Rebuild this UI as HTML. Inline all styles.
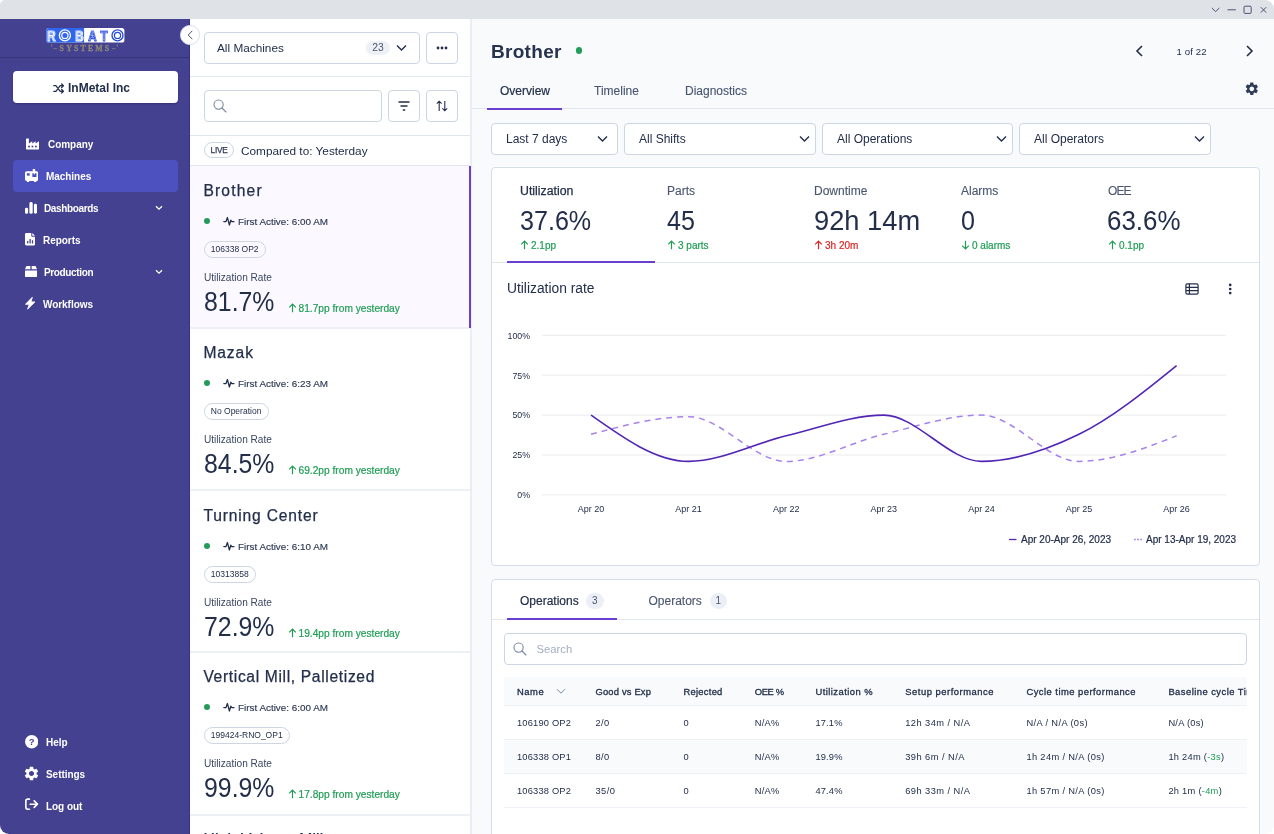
<!DOCTYPE html>
<html lang="en">
<head>
<meta charset="utf-8">
<title>Robato Systems - Machines</title>
<style>
*{box-sizing:border-box;margin:0;padding:0}
html,body{width:1274px;height:834px;background:#fff;overflow:hidden}
body{font-family:"Liberation Sans",sans-serif;color:#222e4a;font-size:12px;position:relative}
.abs{position:absolute}
.win{position:absolute;left:0;top:0;width:1274px;height:834px;border-radius:5px 9px 9px 9px;overflow:hidden;background:#f8fafc;will-change:transform}
.tbar{position:absolute;left:0;top:0;width:1274px;height:19px;background:#dfe2e7}
.side{position:absolute;left:0;top:19px;width:190px;height:815px;background:#434190;border-right:1px solid #363389}
.side .logoline{position:absolute;left:0;top:38px;width:190px;height:1px;background:#37337a}
.org{position:absolute;left:13px;top:51.5px;width:165px;height:32.5px;background:#fff;border-radius:4px;text-align:center;line-height:34.5px;padding-right:8px;font-size:12px;font-weight:700;color:#222e4a;box-shadow:0 1px 2px rgba(0,0,0,.2)}
.nav{position:absolute;left:13px;width:165px;height:32px;border-radius:4px;color:#fff;font-weight:700;font-size:10px;line-height:33.5px;letter-spacing:-.05px}
.nav.on{background:#4c51bf}
.nav svg{position:absolute}
.nav span{position:absolute;top:0}
.nav span.nr{letter-spacing:-.36px}
.list{position:absolute;left:190px;top:19px;width:282px;height:815px;background:#fff;border-right:2px solid #e9eef4}
.hl{position:absolute;left:0;width:280px;height:1px;background:#dfe6ee}
.box{position:absolute;border:1px solid #ccd6e3;border-radius:4px;background:#fff}
.t{position:absolute;white-space:nowrap}
.main{position:absolute;left:471px;top:19px;width:803px;height:815px}
.card{position:absolute;background:#fff;border:1px solid #d5dde8;border-radius:4px}
.green{color:#1f9d55}
.red{color:#e02424}
.mc{position:absolute;left:0;width:280px;height:163px;border-bottom:2px solid #edf1f6}
.mc .nm{position:absolute;left:13.4px;top:16px;font-size:15.6px;color:#222e4a;white-space:nowrap;-webkit-text-stroke:.25px #222e4a}
.mc .dot{position:absolute;left:13.7px;top:51.7px;width:6.6px;height:6.6px;border-radius:50%;background:#259b5b}
.mc .fa{position:absolute;left:48px;top:49.5px;font-size:9.9px;color:#2d3954;white-space:nowrap;-webkit-text-stroke:.15px #2d3954}
.mc .pulse{position:absolute;left:33.2px;top:49.2px}
.mc .tag{position:absolute;left:13.5px;top:74.5px;height:17px;border:1px solid #ccd6e3;border-radius:8.5px;font-size:8.5px;line-height:15px;padding:0 6.3px;color:#222e4a;white-space:nowrap}
.mc .ul{position:absolute;left:14px;top:106px;font-size:10.1px;color:#3a4660}
.mc .uv{position:absolute;left:13.5px;top:120.7px;font-size:27px;color:#222e4a;transform:scaleX(.92);transform-origin:0 0}
.mc .ud{position:absolute;left:97.5px;top:137px;font-size:10.2px;color:#1f9d55;white-space:nowrap;-webkit-text-stroke:.2px #1f9d55}
.th{position:absolute;white-space:nowrap;top:9.3px;font-size:9.4px;color:#222e4a;-webkit-text-stroke:.3px #222e4a}
.td{position:absolute;white-space:nowrap;font-size:9.3px;color:#222e4a}
</style>
</head>
<body>
<div class="win">
<div class="tbar"><svg class="abs" style="left:1208px;top:4px" width="62" height="12" viewBox="0 0 62 12" fill="none" stroke="#4a5670" stroke-width="1"><path d="M3.800 4 7.600 7.600 11.400 4"/><path d="M19.500 5.800h8.300"/><rect x="36" y="2.200" width="7.200" height="7.200" rx="1"/><path d="M52.800 3.200l5.400 5.400M58.200 3.200l-5.400 5.400"/></svg></div>
<div class="side">
<svg class="abs" style="left:40px;top:3px" width="90" height="36" viewBox="40 22 90 36">
<rect x="46.200" y="28" width="78.200" height="14.600" rx="2.600" fill="#fff"/>
<path d="M48.800 28H84.100V42.600H48.800A2.600 2.600 0 0 1 46.200 40V30.600A2.600 2.600 0 0 1 48.800 28z" fill="#2f66f0"/>
<g transform="translate(51.4 41.300) scale(.76 1)"><text x="0" y="0" text-anchor="middle" font-family="Liberation Sans, sans-serif" font-weight="700" font-size="15.200" fill="#fff" stroke="#fff" stroke-width="1.100" stroke-linejoin="round">R</text><text x="0" y="0" text-anchor="middle" font-family="Liberation Sans, sans-serif" font-weight="700" font-size="15.200" fill="none" stroke="#2f66f0" stroke-width=".45" stroke-opacity=".75" transform="scale(.86) translate(0 -.95)">R</text></g>
<circle cx="64.900" cy="35.400" r="5.500" fill="#2f66f0" stroke="#fff" stroke-width="1.300"/><circle cx="64.900" cy="35.400" r="3.100" fill="#2f66f0" stroke="#fff" stroke-width="1.200"/>
<g transform="translate(79.3 41.300) scale(.76 1)"><text x="0" y="0" text-anchor="middle" font-family="Liberation Sans, sans-serif" font-weight="700" font-size="15.200" fill="#fff" stroke="#fff" stroke-width="1.100" stroke-linejoin="round">B</text><text x="0" y="0" text-anchor="middle" font-family="Liberation Sans, sans-serif" font-weight="700" font-size="15.200" fill="none" stroke="#2f66f0" stroke-width=".45" stroke-opacity=".75" transform="scale(.86) translate(0 -.95)">B</text></g>
<g transform="translate(92.3 41.300) scale(.76 1)"><text x="0" y="0" text-anchor="middle" font-family="Liberation Sans, sans-serif" font-weight="700" font-size="15.200" fill="#2348e0" stroke="#2348e0" stroke-width="1.100" stroke-linejoin="round">A</text><text x="0" y="0" text-anchor="middle" font-family="Liberation Sans, sans-serif" font-weight="700" font-size="15.200" fill="none" stroke="#fff" stroke-width=".45" stroke-opacity=".75" transform="scale(.86) translate(0 -.95)">A</text></g>
<g transform="translate(104.1 41.300) scale(.76 1)"><text x="0" y="0" text-anchor="middle" font-family="Liberation Sans, sans-serif" font-weight="700" font-size="15.200" fill="#2348e0" stroke="#2348e0" stroke-width="1.100" stroke-linejoin="round">T</text><text x="0" y="0" text-anchor="middle" font-family="Liberation Sans, sans-serif" font-weight="700" font-size="15.200" fill="none" stroke="#fff" stroke-width=".45" stroke-opacity=".75" transform="scale(.86) translate(0 -.95)">T</text></g>
<circle cx="117.500" cy="35.400" r="5.500" fill="#fff" stroke="#2348e0" stroke-width="1.300"/><circle cx="117.500" cy="35.400" r="3.100" fill="#fff" stroke="#2348e0" stroke-width="1.200"/>
<text x="59.600" y="51" font-family="Liberation Serif, serif" font-weight="700" font-size="7.800" fill="#8d8878" stroke="#8d8878" stroke-width=".3" letter-spacing="2.200">SYSTEMS</text>
<path d="M51.700 44.200v2.600M53.400 48.700h3.600M112 48.700h3.600M117.300 44.200v2.600" stroke="#8d8878" stroke-width=".8" fill="none"/>
</svg>
<div class="logoline"></div>
<div class="org"><svg style="vertical-align:-2px;margin-right:3px" width="12" height="11" viewBox="0 0 12 11"><path d="M.8 2.700h2.100l4.300 5.600h3M.8 8.300h2.100l1.300-1.700M5.900 4.400l1.300-1.700h3M8.600.9l1.800 1.800-1.800 1.800M8.600 6.500l1.800 1.800-1.800 1.800" fill="none" stroke="#222e4a" stroke-width="1.300" stroke-linecap="round" stroke-linejoin="round"/></svg>InMetal Inc</div>
<div class="nav" style="top:109px"><svg style="left:12.800px;top:10.400px" width="13.500" height="11.400" viewBox="0 0 14 12.400" preserveAspectRatio="none"><path d="M.8.500h2.200V6l3.500-2.400V6L10 3.600V6l3.500-2.400V11.700a.8.8 0 0 1-.8.800H.8a.8.800 0 0 1-.8-.8V1.300A.8.800 0 0 1 .8.500z" fill="#fff"/><rect x="2.200" y="8.400" width="1.800" height="1.800" fill="#434190"/><rect x="5.800" y="8.400" width="1.800" height="1.800" fill="#434190"/><rect x="9.400" y="8.400" width="1.800" height="1.800" fill="#434190"/></svg><span style="left:35px">Company</span></div>
<div class="nav on" style="top:141px"><svg style="left:12.200px;top:9px" width="13.200" height="13.200" viewBox="0 0 14 14.300" preserveAspectRatio="none"><path d="M8.200 0h2.600v2.400h1.400A1.800 1.800 0 0 1 14 4.200v7A1.800 1.800 0 0 1 12.200 13H12v1.300H9.600V13H4.400v1.300H2V13h-.2A1.800 1.800 0 0 1 0 11.200v-7A1.800 1.800 0 0 1 1.800 2.400H8.200z" fill="#fff"/><rect x="2" y="4.600" width="3" height="2.600" fill="#4c51bf"/><path d="M7.800 4.600h1.300l.9 1.500.9-1.500h1.300v4H7.800z" fill="#4c51bf"/></svg><span style="left:33px">Machines</span></div>
<div class="nav" style="top:173px"><svg style="left:12px;top:10.300px" width="12" height="11.700" viewBox="0 0 12 11.700"><rect x="0" y="5.700" width="3.100" height="6" rx="1.300" fill="#fff"/><rect x="4.400" y="0" width="3.300" height="11.700" rx="1.500" fill="#fff"/><rect x="8.900" y="1.800" width="3.100" height="9.900" rx="1.400" fill="#fff"/></svg><span class="nr" style="left:31px">Dashboards</span><svg style="left:142px;top:13px" width="8" height="6" viewBox="0 0 8 6"><path d="M1 1.200 4 4.200 7 1.200" fill="none" stroke="#fff" stroke-width="1.300"/></svg></div>
<div class="nav" style="top:205px"><svg style="left:12px;top:9.200px" width="10.200" height="12.400" viewBox="0 0 11 14" preserveAspectRatio="none"><path d="M1.500 0H6.800V3.200A1 1 0 0 0 7.800 4.200H11V12.500A1.500 1.500 0 0 1 9.500 14H1.500A1.500 1.500 0 0 1 0 12.500V1.500A1.500 1.500 0 0 1 1.500 0z" fill="#fff"/><path d="M7.800 0 11 3.200H7.800z" fill="#fff"/><rect x="2.200" y="9" width="1.400" height="2.800" fill="#434190"/><rect x="4.800" y="6.800" width="1.400" height="5" fill="#434190"/><rect x="7.400" y="8.200" width="1.400" height="3.600" fill="#434190"/></svg><span style="left:30px">Reports</span></div>
<div class="nav" style="top:237px"><svg style="left:12px;top:10.100px" width="12" height="11.400" viewBox="0 0 13 13" preserveAspectRatio="none"><path d="M2 0H5.800V3.600H0L1.100.8A1.300 1.300 0 0 1 2 0zM7.200 0H11a1.300 1.300 0 0 1 .9.800L13 3.600H7.200zM0 5h13v6.500A1.500 1.500 0 0 1 11.500 13h-10A1.500 1.500 0 0 1 0 11.500z" fill="#fff"/></svg><span class="nr" style="left:31px">Production</span><svg style="left:142px;top:13px" width="8" height="6" viewBox="0 0 8 6"><path d="M1 1.200 4 4.200 7 1.200" fill="none" stroke="#fff" stroke-width="1.300"/></svg></div>
<div class="nav" style="top:269px"><svg style="left:12px;top:9px" width="10.400" height="12.500" viewBox="0 0 10.400 12.500"><path d="M7.300.300 .5 7.300H4.300L2.600 12.200 9.900 4.900H6z" fill="#fff" stroke="#fff" stroke-width=".9" stroke-linejoin="round"/></svg><span style="left:30px">Workflows</span></div>
<div class="nav" style="top:707px"><svg style="left:12.100px;top:9.300px" width="13.400" height="13.400" viewBox="0 0 14 14"><circle cx="7" cy="7" r="7" fill="#fff"/><text x="7" y="10.600" text-anchor="middle" font-family="Liberation Sans, sans-serif" font-weight="700" font-size="10" fill="#434190">?</text></svg><span style="left:33px">Help</span></div>
<div class="nav" style="top:739px"><svg style="left:10.300px;top:7px" width="17" height="17" viewBox="0 0 24 24"><path fill="#fff" d="M19.14 12.94c.04-.3.06-.61.06-.94 0-.32-.02-.64-.07-.94l2.03-1.58a.49.49 0 0 0 .12-.61l-1.92-3.32a.488.488 0 0 0-.59-.22l-2.39.96c-.5-.38-1.03-.7-1.62-.94l-.36-2.54a.484.484 0 0 0-.48-.41h-3.84c-.24 0-.43.17-.47.41l-.36 2.54c-.59.24-1.13.57-1.62.94l-2.39-.96c-.22-.08-.47 0-.59.22L2.740 8.870c-.12.21-.08.47.12.61l2.030 1.580c-.05.3-.09.63-.09.94s.02.64.07.94l-2.030 1.580a.49.49 0 0 0-.12.61l1.920 3.320c.12.22.37.29.59.22l2.390-.96c.5.38 1.030.7 1.620.94l.36 2.540c.05.24.24.41.48.41h3.840c.24 0 .44-.17.470-.41l.36-2.540c.59-.24 1.130-.56 1.620-.94l2.390.96c.22.08.47 0 .59-.22l1.920-3.320c.12-.22.07-.47-.12-.61l-2.010-1.580zM12 15.600c-1.980 0-3.600-1.620-3.600-3.600s1.620-3.600 3.600-3.600 3.600 1.620 3.600 3.600-1.620 3.600-3.600 3.600z"/></svg><span style="left:33px">Settings</span></div>
<div class="nav" style="top:771px"><svg style="left:12.200px;top:8.300px" width="13.400" height="12.400" viewBox="0 0 14 12.400"><path d="M4.600.9H2.900A2 2 0 0 0 .9 2.900v6.600a2 2 0 0 0 2 2h1.700M5.400 6.200h7.400M9.600 2.800 13 6.200l-3.400 3.400" fill="none" stroke="#fff" stroke-width="1.700" stroke-linecap="round" stroke-linejoin="round"/></svg><span style="left:33px">Log out</span></div>
</div>
<div class="abs" style="left:180.400px;top:25px;width:19.500px;height:19.500px;border-radius:50%;background:#fff;border:1px solid #d9dfea;z-index:5"><svg class="abs" style="left:4.300px;top:3.800px" width="10" height="10" viewBox="0 0 10 10"><path d="M6.300.8 2.200 5l4.100 4.200" fill="none" stroke="#4a5670" stroke-width="1"/></svg></div>
<div class="list">
<div class="box" style="left:14px;top:13px;width:216px;height:32px"></div>
<div class="t" style="left:27px;top:22px;font-size:11.800px">All Machines</div>
<div class="abs" style="left:176px;top:22px;width:24px;height:14px;border-radius:7px;background:#edf1f6;font-size:10.300px;line-height:14.500px;text-align:center;color:#4a5670">23</div>
<svg class="abs" style="left:206px;top:25px" width="11" height="8" viewBox="0 0 11 8"><path d="M1 1.500 5.500 6 10 1.500" fill="none" stroke="#222e4a" stroke-width="1.400"/></svg>
<div class="box" style="left:236px;top:13px;width:32px;height:32px"></div>
<svg class="abs" style="left:246px;top:27px" width="12" height="4" viewBox="0 0 12 4"><circle cx="2" cy="2" r="1.400" fill="#222e4a"/><circle cx="6" cy="2" r="1.400" fill="#222e4a"/><circle cx="10" cy="2" r="1.400" fill="#222e4a"/></svg>
<div class="hl" style="top:57px"></div>
<div class="box" style="left:14px;top:71px;width:178px;height:32px"></div>
<svg class="abs" style="left:23px;top:80px" width="14" height="14" viewBox="0 0 14 14"><circle cx="5.600" cy="5.600" r="4.600" fill="none" stroke="#7b8aa3" stroke-width="1.100"/><path d="M9 9 13 13" stroke="#7b8aa3" stroke-width="1.100" stroke-linecap="round"/></svg>
<div class="box" style="left:198px;top:71px;width:32px;height:32px"></div>
<svg class="abs" style="left:208px;top:82px" width="12" height="10" viewBox="0 0 12 10"><path d="M.5 1h11M2.500 5h7M4.800 9h2.400" stroke="#222e4a" stroke-width="1.300" fill="none"/></svg>
<div class="box" style="left:236px;top:71px;width:32px;height:32px"></div>
<svg class="abs" style="left:246px;top:81px" width="12" height="12" viewBox="0 0 12 12"><path d="M3.200 11V1.200M.8 3.600 3.200 1.200 5.600 3.600M8.800 1v9.800M6.400 8.400 8.800 10.800 11.200 8.400" fill="none" stroke="#222e4a" stroke-width="1.100"/></svg>
<div class="hl" style="top:116px"></div>
<div class="abs" style="left:14px;top:123px;width:30px;height:16px;border:1px solid #ccd6e3;border-radius:8px;font-size:8.300px;line-height:14.500px;text-align:center;color:#2d3954;-webkit-text-stroke:.25px #2d3954;letter-spacing:-0.3px">LIVE</div>
<div class="t" style="left:51px;top:124.500px;font-size:11.800px">Compared to: Yesterday</div>
<div class="hl" style="top:146px"></div>
<div class="mc" style="top:147px;background:#fbf9ff;"><div class="nm" style="letter-spacing:1.18px">Brother</div><div class="dot"></div><svg class="pulse" width="12" height="12" viewBox="0 0 12 12"><path d="M.8 6.500H3L4.400 2.500 6.400 10 7.800 5.200 8.600 6.500H11" fill="none" stroke="#222e4a" stroke-width="1.250" stroke-linejoin="round" stroke-linecap="round"/></svg><div class="fa">First Active: 6:00 AM</div><div class="tag">106338 OP2</div><div class="ul">Utilization Rate</div><div class="uv">81.7%</div><div class="ud"><svg width="9" height="10" viewBox="0 0 9 10" style="vertical-align:-1px;margin-right:2px"><path d="M4.500 9.200V1.200M1.200 4.400 4.500 1.100 7.800 4.400" fill="none" stroke="#1f9d55" stroke-width="1.200"/></svg>81.7pp from yesterday</div></div>
<div class="abs" style="left:279px;top:147px;width:2px;height:162px;background:#6a3fd0"></div>
<div class="mc" style="top:309px;"><div class="nm" style="letter-spacing:0.91px">Mazak</div><div class="dot"></div><svg class="pulse" width="12" height="12" viewBox="0 0 12 12"><path d="M.8 6.500H3L4.400 2.500 6.400 10 7.800 5.200 8.600 6.500H11" fill="none" stroke="#222e4a" stroke-width="1.250" stroke-linejoin="round" stroke-linecap="round"/></svg><div class="fa">First Active: 6:23 AM</div><div class="tag">No Operation</div><div class="ul">Utilization Rate</div><div class="uv">84.5%</div><div class="ud"><svg width="9" height="10" viewBox="0 0 9 10" style="vertical-align:-1px;margin-right:2px"><path d="M4.500 9.200V1.200M1.200 4.400 4.500 1.100 7.800 4.400" fill="none" stroke="#1f9d55" stroke-width="1.200"/></svg>69.2pp from yesterday</div></div>
<div class="mc" style="top:472px;height:162px;"><div class="nm" style="letter-spacing:0.84px">Turning Center</div><div class="dot"></div><svg class="pulse" width="12" height="12" viewBox="0 0 12 12"><path d="M.8 6.500H3L4.400 2.500 6.400 10 7.800 5.200 8.600 6.500H11" fill="none" stroke="#222e4a" stroke-width="1.250" stroke-linejoin="round" stroke-linecap="round"/></svg><div class="fa">First Active: 6:10 AM</div><div class="tag">10313858</div><div class="ul">Utilization Rate</div><div class="uv">72.9%</div><div class="ud"><svg width="9" height="10" viewBox="0 0 9 10" style="vertical-align:-1px;margin-right:2px"><path d="M4.500 9.200V1.200M1.200 4.400 4.500 1.100 7.800 4.400" fill="none" stroke="#1f9d55" stroke-width="1.200"/></svg>19.4pp from yesterday</div></div>
<div class="mc" style="top:633px;height:164px;"><div class="nm" style="letter-spacing:0.66px">Vertical Mill, Palletized</div><div class="dot"></div><svg class="pulse" width="12" height="12" viewBox="0 0 12 12"><path d="M.8 6.500H3L4.400 2.500 6.400 10 7.800 5.200 8.600 6.500H11" fill="none" stroke="#222e4a" stroke-width="1.250" stroke-linejoin="round" stroke-linecap="round"/></svg><div class="fa">First Active: 6:00 AM</div><div class="tag">199424-RNO_OP1</div><div class="ul">Utilization Rate</div><div class="uv">99.9%</div><div class="ud"><svg width="9" height="10" viewBox="0 0 9 10" style="vertical-align:-1px;margin-right:2px"><path d="M4.500 9.200V1.200M1.200 4.400 4.500 1.100 7.800 4.400" fill="none" stroke="#1f9d55" stroke-width="1.200"/></svg>17.8pp from yesterday</div></div>
<div class="mc" style="top:796px;"><div class="nm" style="letter-spacing:0.25px">High Volume Mill</div><div class="dot"></div><svg class="pulse" width="12" height="12" viewBox="0 0 12 12"><path d="M.8 6.500H3L4.400 2.500 6.400 10 7.800 5.200 8.600 6.500H11" fill="none" stroke="#222e4a" stroke-width="1.250" stroke-linejoin="round" stroke-linecap="round"/></svg><div class="fa">First Active: 6:00 AM</div><div class="tag">106338 OP2</div><div class="ul">Utilization Rate</div><div class="uv">50.0%</div><div class="ud"><svg width="9" height="10" viewBox="0 0 9 10" style="vertical-align:-1px;margin-right:2px"><path d="M4.500 9.200V1.200M1.200 4.400 4.500 1.100 7.800 4.400" fill="none" stroke="#1f9d55" stroke-width="1.200"/></svg>10.0pp from yesterday</div></div>
</div>
<div class="main">
<div class="t" style="left:20px;top:21.7px;font-size:19px;font-weight:700;letter-spacing:.3px;color:#26324e">Brother</div>
<div class="abs" style="left:104.8px;top:28.45px;width:6.600px;height:6.600px;border-radius:50%;background:#259b5b"></div>
<svg class="abs" style="left:664.4px;top:26px" width="9" height="12" viewBox="0 0 9 12"><path d="M7 1 2 6l5 5" fill="none" stroke="#222e4a" stroke-width="1.600"/></svg>
<div class="t" style="left:705.5px;top:27.3px;font-size:9.600px;letter-spacing:0.13px">1 of 22</div>
<svg class="abs" style="left:773.5px;top:26px" width="9" height="12" viewBox="0 0 9 12"><path d="M2 1l5 5-5 5" fill="none" stroke="#222e4a" stroke-width="1.600"/></svg>
<div class="t" style="left:29px;top:64.5px;font-size:12px;-webkit-text-stroke:.2px #222e4a">Overview</div>
<div class="t" style="left:123px;top:64.5px;font-size:12px;color:#4a5670;-webkit-text-stroke:.12px #4a5670">Timeline</div>
<div class="t" style="left:214px;top:64.5px;font-size:12px;color:#4a5670;-webkit-text-stroke:.12px #4a5670">Diagnostics</div>
<div class="abs" style="left:1px;top:89px;width:802px;height:1px;background:#dfe6ee"></div>
<div class="abs" style="left:16px;top:88.5px;width:75px;height:2px;background:#6a3fd0"></div>
<svg class="abs" style="left:773.1px;top:62.2px" width="15.600" height="15.600" viewBox="0 0 24 24"><path fill="#2f3b57" d="M19.14 12.94c.04-.3.06-.61.06-.94 0-.32-.02-.64-.07-.94l2.03-1.58a.49.49 0 0 0 .12-.61l-1.92-3.32a.488.488 0 0 0-.59-.22l-2.39.96c-.5-.38-1.03-.7-1.62-.94l-.36-2.54a.484.484 0 0 0-.48-.41h-3.84c-.24 0-.43.17-.47.41l-.36 2.54c-.59.24-1.13.57-1.62.94l-2.39-.96c-.22-.08-.47 0-.59.22L2.740 8.870c-.12.21-.08.47.12.61l2.030 1.580c-.05.3-.09.63-.09.94s.02.64.07.94l-2.030 1.580a.49.49 0 0 0-.12.61l1.920 3.320c.12.22.37.29.59.22l2.390-.96c.5.38 1.030.7 1.620.94l.36 2.540c.05.24.24.41.48.41h3.840c.24 0 .44-.17.470-.41l.36-2.540c.59-.24 1.130-.56 1.620-.94l2.390.96c.22.08.47 0 .59-.22l1.920-3.320c.12-.22.07-.47-.12-.61l-2.010-1.580zM12 15.600c-1.980 0-3.600-1.620-3.600-3.600s1.620-3.600 3.600-3.600 3.600 1.620 3.600 3.600-1.620 3.600-3.600 3.600z"/></svg>
<div class="box" style="left:20px;top:104px;width:127px;height:32px"></div><div class="t" style="left:35px;top:112.5px;font-size:12px">Last 7 days</div><svg class="abs" style="left:125.8px;top:116px" width="11" height="8" viewBox="0 0 11 8"><path d="M1 1.500 5.500 6 10 1.500" fill="none" stroke="#222e4a" stroke-width="1.400"/></svg>
<div class="box" style="left:153px;top:104px;width:191.5px;height:32px"></div><div class="t" style="left:168px;top:112.5px;font-size:12px">All Shifts</div><svg class="abs" style="left:327.5px;top:116px" width="11" height="8" viewBox="0 0 11 8"><path d="M1 1.500 5.500 6 10 1.500" fill="none" stroke="#222e4a" stroke-width="1.400"/></svg>
<div class="box" style="left:351px;top:104px;width:191px;height:32px"></div><div class="t" style="left:366px;top:112.5px;font-size:12px">All Operations</div><svg class="abs" style="left:525px;top:116px" width="11" height="8" viewBox="0 0 11 8"><path d="M1 1.500 5.500 6 10 1.500" fill="none" stroke="#222e4a" stroke-width="1.400"/></svg>
<div class="box" style="left:548px;top:104px;width:191.5px;height:32px"></div><div class="t" style="left:563px;top:112.5px;font-size:12px">All Operators</div><svg class="abs" style="left:722.5px;top:116px" width="11" height="8" viewBox="0 0 11 8"><path d="M1 1.500 5.500 6 10 1.500" fill="none" stroke="#222e4a" stroke-width="1.400"/></svg>
<div class="card" style="left:20px;top:148px;width:769px;height:399px"></div>
<div class="abs" style="left:21px;top:243px;width:767px;height:1px;background:#dfe6ee"></div>
<div class="abs" style="left:36px;top:242.3px;width:147.500px;height:2px;background:#6a3fd0"></div>
<div class="t" style="left:49px;top:164.5px;font-size:12.300px;-webkit-text-stroke:.25px #222e4a;color:#222e4a;letter-spacing:0px">Utilization</div>
<div class="t" style="left:49px;top:187.3px;font-size:27px;transform:scaleX(0.93);transform-origin:0 0">37.6%</div>
<div class="t" style="left:49px;top:220.5px;font-size:10px;color:#1f9d55;-webkit-text-stroke:.2px #1f9d55"><svg width="9" height="10" viewBox="0 0 9 10" style="vertical-align:-1.500px;margin-right:2px"><path d="M4.500 9.200V1.200M1.200 4.400 4.500 1.100 7.800 4.400" fill="none" stroke="#1f9d55" stroke-width="1.200"/></svg>2.1pp</div>
<div class="t" style="left:196px;top:164.5px;font-size:12px;-webkit-text-stroke:.12px #4a5670;color:#4a5670;letter-spacing:0px">Parts</div>
<div class="t" style="left:196px;top:187.3px;font-size:27px;transform:scaleX(0.93);transform-origin:0 0">45</div>
<div class="t" style="left:196px;top:220.5px;font-size:10px;color:#1f9d55;-webkit-text-stroke:.2px #1f9d55"><svg width="9" height="10" viewBox="0 0 9 10" style="vertical-align:-1.500px;margin-right:2px"><path d="M4.500 9.200V1.200M1.200 4.400 4.500 1.100 7.800 4.400" fill="none" stroke="#1f9d55" stroke-width="1.200"/></svg>3 parts</div>
<div class="t" style="left:343px;top:164.5px;font-size:12px;-webkit-text-stroke:.12px #4a5670;color:#4a5670;letter-spacing:0px">Downtime</div>
<div class="t" style="left:343px;top:187.3px;font-size:27px;transform:scaleX(1.01);transform-origin:0 0">92h 14m</div>
<div class="t" style="left:343px;top:220.5px;font-size:10px;color:#e02424;-webkit-text-stroke:.2px #e02424"><svg width="9" height="10" viewBox="0 0 9 10" style="vertical-align:-1.500px;margin-right:2px"><path d="M4.500 9.200V1.200M1.200 4.400 4.500 1.100 7.800 4.400" fill="none" stroke="#e02424" stroke-width="1.200"/></svg>3h 20m</div>
<div class="t" style="left:490px;top:164.5px;font-size:12px;-webkit-text-stroke:.12px #4a5670;color:#4a5670;letter-spacing:0px">Alarms</div>
<div class="t" style="left:490px;top:187.3px;font-size:27px;transform:scaleX(0.93);transform-origin:0 0">0</div>
<div class="t" style="left:490px;top:220.5px;font-size:10px;color:#1f9d55;-webkit-text-stroke:.2px #1f9d55"><svg width="9" height="10" viewBox="0 0 9 10" style="vertical-align:-1.500px;margin-right:2px"><path d="M4.500 .8V8.800M1.200 5.600 4.500 8.900 7.800 5.600" fill="none" stroke="#1f9d55" stroke-width="1.200"/></svg>0 alarms</div>
<div class="t" style="left:637px;top:164.5px;font-size:12px;-webkit-text-stroke:.12px #4a5670;color:#4a5670;letter-spacing:-0.9px">OEE</div>
<div class="t" style="left:636px;top:187.3px;font-size:27px;transform:scaleX(0.96);transform-origin:0 0">63.6%</div>
<div class="t" style="left:637px;top:220.5px;font-size:10px;color:#1f9d55;-webkit-text-stroke:.2px #1f9d55"><svg width="9" height="10" viewBox="0 0 9 10" style="vertical-align:-1.500px;margin-right:2px"><path d="M4.500 9.200V1.200M1.200 4.400 4.500 1.100 7.800 4.400" fill="none" stroke="#1f9d55" stroke-width="1.200"/></svg>0.1pp</div>
<div class="t" style="left:36px;top:261.8px;font-size:13.800px">Utilization rate</div>
<svg class="abs" style="left:714px;top:264px" width="14" height="12" viewBox="0 0 14 12"><rect x=".9" y=".9" width="12.200" height="10.200" rx="1.400" fill="none" stroke="#222e4a" stroke-width="1.200"/><path d="M1 4.300h12M1 7.700h12M4.400 1v10" stroke="#222e4a" stroke-width="1.200" fill="none"/></svg>
<svg class="abs" style="left:757px;top:264px" width="4" height="12" viewBox="0 0 4 12"><circle cx="2.200" cy="1.900" r="1.350" fill="#222e4a"/><circle cx="2.200" cy="6" r="1.350" fill="#222e4a"/><circle cx="2.200" cy="10.100" r="1.350" fill="#222e4a"/></svg>
<svg class="abs" style="left:0;top:0" width="803" height="560" viewBox="0 0 803 560" font-family="Liberation Sans, sans-serif" font-size="8.800" fill="#222e4a">
<path d="M71 316.3H755" stroke="#ebebee" stroke-width="1"/><text x="59" y="319.6" text-anchor="end">100%</text>
<path d="M71 356.2H755" stroke="#ebebee" stroke-width="1"/><text x="59" y="359.5" text-anchor="end">75%</text>
<path d="M71 396.1H755" stroke="#ebebee" stroke-width="1"/><text x="59" y="399.4" text-anchor="end">50%</text>
<path d="M71 436.0H755" stroke="#ebebee" stroke-width="1"/><text x="59" y="439.3" text-anchor="end">25%</text>
<path d="M71 475.9H755" stroke="#ebebee" stroke-width="1"/><text x="59" y="479.2" text-anchor="end">0%</text>
<text x="120.0" y="493" font-size="9" text-anchor="middle">Apr 20</text>
<text x="217.6" y="493" font-size="9" text-anchor="middle">Apr 21</text>
<text x="315.2" y="493" font-size="9" text-anchor="middle">Apr 22</text>
<text x="412.8" y="493" font-size="9" text-anchor="middle">Apr 23</text>
<text x="510.4" y="493" font-size="9" text-anchor="middle">Apr 24</text>
<text x="608.0" y="493" font-size="9" text-anchor="middle">Apr 25</text>
<text x="705.6" y="493" font-size="9" text-anchor="middle">Apr 26</text>
<path d="M120.0,415.3C152.5,406.5 185.1,397.7 217.6,397.7C250.1,397.7 282.7,442.4 315.2,442.4C347.7,442.4 380.3,423.0 412.8,415.3C445.3,407.5 477.9,396.1 510.4,396.1C542.9,396.1 575.5,442.4 608.0,442.4C640.5,442.4 673.1,429.6 705.6,416.8" fill="none" stroke="#a782ee" stroke-width="1.500" stroke-dasharray="6 5"/>
<path d="M120.0,396.1C152.5,419.2 185.1,442.4 217.6,442.4C250.1,442.4 282.7,424.6 315.2,416.8C347.7,409.1 380.3,396.1 412.8,396.1C445.3,396.1 477.9,442.4 510.4,442.4C542.9,442.4 575.5,431.2 608.0,415.3C640.5,399.3 673.1,373.0 705.6,346.6" fill="none" stroke="#5226b5" stroke-width="1.600"/>
<path d="M538 520.5h7.500" stroke="#5226b5" stroke-width="1.300"/><text x="550" y="524" font-size="10" stroke="#222e4a" stroke-width=".2">Apr 20-Apr 26, 2023</text>
<path d="M663 520.5h8" stroke="#a782ee" stroke-width="1.300" stroke-dasharray="1.800 1.300"/><text x="675" y="524" font-size="10" stroke="#222e4a" stroke-width=".2">Apr 13-Apr 19, 2023</text>
</svg>
<div class="card" style="left:20px;top:560px;width:769px;height:270px"></div>
<div class="t" style="left:49px;top:574.5px;font-size:12px;-webkit-text-stroke:.2px #222e4a">Operations</div>
<div class="abs" style="left:115px;top:574px;width:17.500px;height:16px;border-radius:8px;background:#ecf0f6;font-size:10px;line-height:16px;text-align:center;color:#4a5670">3</div>
<div class="t" style="left:177.5px;top:574.5px;font-size:12px;color:#4a5670;-webkit-text-stroke:.12px #4a5670">Operators</div>
<div class="abs" style="left:238.5px;top:574px;width:17.500px;height:16px;border-radius:8px;background:#ecf0f6;font-size:10px;line-height:16px;text-align:center;color:#4a5670">1</div>
<div class="abs" style="left:21px;top:600px;width:767px;height:1px;background:#dfe6ee"></div>
<div class="abs" style="left:36px;top:599px;width:110px;height:2px;background:#6a3fd0"></div>
<div class="box" style="left:33px;top:614px;width:742.500px;height:32px"></div>
<svg class="abs" style="left:41.5px;top:623px" width="14" height="14" viewBox="0 0 14 14"><circle cx="5.600" cy="5.600" r="4.600" fill="none" stroke="#7b8aa3" stroke-width="1.100"/><path d="M9 9 13 13" stroke="#7b8aa3" stroke-width="1.100" stroke-linecap="round"/></svg>
<div class="t" style="left:65.5px;top:623.5px;font-size:11.300px;color:#a3aec0">Search</div>
<div class="abs" style="left:33px;top:658px;width:742.500px;height:157px;overflow:hidden">
<div class="abs" style="left:0;top:0;width:760px;height:28.500px;background:#f8fafc;border-bottom:1px solid #eef1f5"></div>
<div class="abs" style="left:0;top:62.500px;width:760px;height:34px;background:#f9fafc"></div>
<div class="abs" style="left:0;top:62px;width:760px;height:1px;background:#eef1f5"></div>
<div class="abs" style="left:0;top:96px;width:760px;height:1px;background:#eef1f5"></div>
<div class="abs" style="left:0;top:130px;width:760px;height:1px;background:#eef1f5"></div>
<div class="th" style="left:13px;letter-spacing:0.53px">Name</div>
<div class="th" style="left:91.5px;letter-spacing:0.17px">Good vs Exp</div>
<div class="th" style="left:179.5px;letter-spacing:0.26px">Rejected</div>
<div class="th" style="left:250.7px;letter-spacing:-0.34px">OEE %</div>
<div class="th" style="left:311.4px;letter-spacing:0.47px">Utilization %</div>
<div class="th" style="left:401.2px;letter-spacing:0.54px">Setup performance</div>
<div class="th" style="left:522.4px;letter-spacing:0.48px">Cycle time performance</div>
<div class="th" style="left:664.4px;letter-spacing:0.47px">Baseline cycle Time</div>
<svg class="abs" style="left:51.700000000000045px;top:11px" width="10" height="7" viewBox="0 0 10 7"><path d="M1 1.200 5 5.200 9 1.200" fill="none" stroke="#7b8aa3" stroke-width="1"/></svg>
<div class="td" style="left:13px;top:40.6px;letter-spacing:0.19px">106190 OP2</div>
<div class="td" style="left:91.5px;top:40.6px;letter-spacing:0.42px">2/0</div>
<div class="td" style="left:179.5px;top:40.6px;letter-spacing:0.39px">0</div>
<div class="td" style="left:250.7px;top:40.6px;letter-spacing:0.23px">N/A%</div>
<div class="td" style="left:311.4px;top:40.6px;letter-spacing:0.16px">17.1%</div>
<div class="td" style="left:401.2px;top:40.6px;letter-spacing:0.45px">12h 34m / N/A</div>
<div class="td" style="left:522.4px;top:40.6px;letter-spacing:0.37px">N/A / N/A (0s)</div>
<div class="td" style="left:664.4px;top:40.6px;letter-spacing:0.24px">N/A (0s)</div>
<div class="td" style="left:13px;top:74.7px;letter-spacing:0.19px">106338 OP1</div>
<div class="td" style="left:91.5px;top:74.7px;letter-spacing:0.42px">8/0</div>
<div class="td" style="left:179.5px;top:74.7px;letter-spacing:0.39px">0</div>
<div class="td" style="left:250.7px;top:74.7px;letter-spacing:0.23px">N/A%</div>
<div class="td" style="left:311.4px;top:74.7px;letter-spacing:0.16px">19.9%</div>
<div class="td" style="left:401.2px;top:74.7px;letter-spacing:0.45px">39h 6m / N/A</div>
<div class="td" style="left:522.4px;top:74.7px;letter-spacing:0.35px">1h 24m / N/A (0s)</div>
<div class="td" style="left:664.4px;top:74.7px;letter-spacing:0.26px">1h 24m (<span class="green">-3s</span>)</div>
<div class="td" style="left:13px;top:108.8px;letter-spacing:0.19px">106338 OP2</div>
<div class="td" style="left:91.5px;top:108.8px;letter-spacing:0.44px">35/0</div>
<div class="td" style="left:179.5px;top:108.8px;letter-spacing:0.39px">0</div>
<div class="td" style="left:250.7px;top:108.8px;letter-spacing:0.23px">N/A%</div>
<div class="td" style="left:311.4px;top:108.8px;letter-spacing:0.16px">47.4%</div>
<div class="td" style="left:401.2px;top:108.8px;letter-spacing:0.45px">69h 33m / N/A</div>
<div class="td" style="left:522.4px;top:108.8px;letter-spacing:0.35px">1h 57m / N/A (0s)</div>
<div class="td" style="left:664.4px;top:108.8px;letter-spacing:0.27px">2h 1m (<span class="green">-4m</span>)</div>
</div>
</div>
</div>
</body>
</html>
